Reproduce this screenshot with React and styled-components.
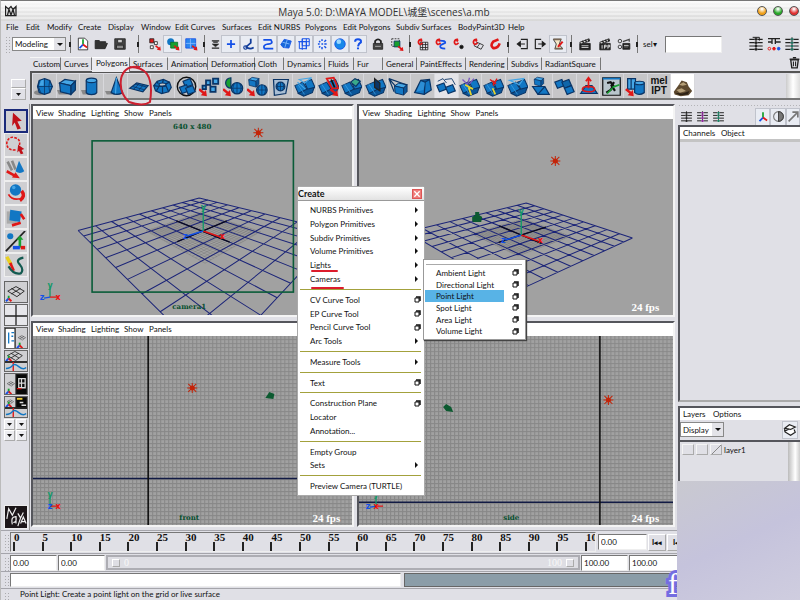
import React from "react";
import styled, { createGlobalStyle, css } from "styled-components";

const ui = `"Lato", "Noto Sans", "Noto Sans CJK SC", sans-serif`;
const chrome = "#e0e0e6";

const Global = createGlobalStyle`
  * { box-sizing: border-box; }
  body { margin: 0; font: 8px/12px ${ui}; color: #111; background: ${chrome}; overflow: hidden; }
  button, input, select { font: inherit; color: inherit; margin: 0; padding: 0; border: 0; border-radius: 0; background: none; }
  svg { display: block; }
`;

/* ---------- layout ---------- */
const Window = styled.div`
  position: relative; display: flex; flex-direction: column; height: 100vh;
  background: ${chrome}; border-top: 1px solid #777; border-left: 1px solid #bbb; overflow: hidden;
`;
const TitleBar = styled.header`
  display: flex; align-items: center; height: 20px; padding: 0 0 0 4px; flex: none;
  background: repeating-linear-gradient(#ffffff66 0 2px, transparent 2px 4px), linear-gradient(#fafafa, #d8d8d8);
  h1 { flex: 1; margin: 0; padding-top: 2px; font: 400 10px/14px "Open Sans", "Noto Sans CJK SC", sans-serif; color: #333; text-align: center; }
`;
const Lamp = styled.button`
  width: 10px; height: 10px; border-radius: 50%; margin-left: 6px; border: 1px solid #555;
  background: radial-gradient(circle at 50% 25%, #fff 5%, ${(p) => p.$c} 60%);
  &:last-child { margin-right: 1px; }
`;
const MenuBar = styled.nav`
  display: grid; grid-template-columns: ${(p) => p.$cols}; align-items: center; flex: none;
  height: ${(p) => p.$h || 13}px; padding-left: ${(p) => p.$pad || 3}px;
  background: ${(p) => p.$bg || "transparent"};
  button { text-align: left; white-space: nowrap; line-height: 12px; }
`;
const StatusLine = styled.div`
  display: flex; align-items: center; height: 22px; padding-left: 4px; flex: none;
`;
const Grip = styled.span`
  flex: none; width: 5px; margin-right: ${(p) => p.$m || 0}px; align-self: stretch; margin-top: 3px;
  background: radial-gradient(circle, #888 0 1px, transparent 1px) 0 0 / 3px 3px; opacity: .6;
`;
const Combo = styled.select`
  width: ${(p) => p.$w}px; height: ${(p) => p.$h || 14}px; padding: 0 2px; border: 1px solid #888; appearance: none; line-height: 10px;
  background: linear-gradient(90deg, transparent calc(100% - 11px), #e3e3e8 0);
  background-color: #fff;
`;
const ComboWrap = styled.span`
  position: relative; display: inline-flex; flex: none;
  &::after { content: ""; position: absolute; right: 3px; top: 6px; border: 3px solid transparent; border-top-color: #111; pointer-events: none; }
`;
const Tool = styled.button`
  flex: none; width: ${(p) => p.$w}px; height: 18px; display: grid; place-items: center;
  ${(p) => p.$on && css`background: #e9ecf3; border: 1px solid #c0c3cc;`}
`;
const Divider = styled.i`
  flex: none; width: ${(p) => p.$w}px; height: 18px;
  background: linear-gradient(#222, #222) center / 2px 5px no-repeat, linear-gradient(#777, #777) center / 1px 18px no-repeat;
`;
const Field = styled.input`
  width: ${(p) => p.$w}px; height: ${(p) => p.$h || 16}px; padding: 0 2px; background: #fff;
  border: 1px solid #eee; border-top-color: #777; border-left-color: #777; flex: none; min-width: 0;
`;
const Spacer = styled.i`flex: 1;`;
const SelLabel = styled.label`width: 24px; padding-left: 2px; flex: none; white-space: nowrap;`;

const ShelfArea = styled.section`display: grid; grid-template-columns: 29px 1fr; height: 46px; flex: none;`;
const ShelfSide = styled.div`
  display: flex; flex-direction: column; justify-content: flex-end; align-items: flex-end; padding: 0 4px 1px 0;
`;
const SideButton = styled.button`
  width: 15px; height: ${(p) => p.$h}px; display: grid; place-items: center; border: 1px solid #aaa; border-top-color: #fff; border-left-color: #fff;
`;
const TabRow = styled.div`display: flex; align-items: flex-end; height: 16px;`;
const Tabs = styled.div`
  display: grid; height: 14px; flex: none;
  grid-template-columns: 31px 31px 38px 38px 40px 47px 29px 41px 29px 29px 34px 49px 42px 34px 59px;
`;
const Tab = styled.button`
  text-align: left; padding-left: 3px; border-right: 1px solid #777; border-top: 1px solid #f6f6f6; white-space: nowrap; height: 13px; line-height: 11px;
  ${(p) => p.$on && css`background: #ececf0; border-top-color: #fff; padding-bottom: 3px; height: 15px; padding-left: 4px;`}
`;
const Shelf = styled.div`
  display: flex; height: 29px; padding: 1px 0 0 1px; border: 2px solid #555; border-right: 0; border-bottom-color: #777; background: #dcdce2;
`;
const ShelfGrid = styled.div`display: grid; grid-template-columns: repeat(28, 1fr); width: 662px; height: 24px;`;
const ShelfButton = styled.button`
  display: grid; place-items: center; background: ${(p) => p.$bg || "#c6c6c8"}; border-right: 1px solid #d8d8dc; overflow: hidden;
`;
const ShelfScroll = styled.i`margin-left: auto; width: 14px; background: linear-gradient(90deg, #ccc, #fff 50%, #ddd);`;
const MelText = styled.b`font: 700 10px/10px "Liberation Sans", sans-serif; color: #111;`;

const Main = styled.main`
  flex: 1; min-height: 0; display: grid; grid-template-columns: 29px 1fr 122px; padding-top: 3px;
`;
const ToolBox = styled.aside`
  display: flex; flex-direction: column; align-items: center; padding: 5px 2px 1px 3px; border-right: 1px solid #999;
`;
const BoxButton = styled.button`
  flex: none; width: 24px; height: 24px; display: grid; place-items: center; overflow: hidden;
  background: ${(p) => p.$bg || "#cfcfd2"}; border: 1px solid #eee;
  ${(p) => p.$on && css`border: 2px solid #1a2a7a;`}
  ${(p) => p.$frame && css`border: 1px solid #666; height: 22px; margin-bottom: 1px;`}
`;
const Gap = styled.i`height: ${(p) => p.$h}px; flex: none;`;
const ArrowPad = styled.div`
  display: grid; grid-template: 11px 11px / 11px 11px; gap: 0 1px;
  button { display: grid; place-items: center; border: 1px solid #aaa; border-top-color: #fff; border-left-color: #fff; background: #ececf0; }
`;
const Views = styled.div`
  display: grid; grid-template: 215fr 208fr / 325fr 319fr; gap: 4px 3px; padding: 0 3px 3px 1px; min-width: 0; min-height: 0;
`;
const View = styled.section`
  display: flex; flex-direction: column; min-width: 0; min-height: 0; border: 2px solid #f4f4f4;
  border-top-color: #55565c; border-left-color: #55565c; background: #a1a1a1;
  svg { flex: 1; width: 100%; min-height: 0; }
`;
const Side = styled.aside`display: flex; flex-direction: column; min-width: 0; background: ${chrome};`;
const DotStrip = styled.i`
  height: 4px; flex: none; background: radial-gradient(circle, #888 0 1px, transparent 1px) 0 0 / 3px 3px; opacity: .5;
`;
const SideTools = styled.div`display: flex; align-items: center; height: 17px; flex: none;`;
const Frame = styled.section`
  display: flex; flex-direction: column; border: 2px solid #55565c; border-right: 0; border-bottom-color: #aaa;
  flex: ${(p) => p.$flex}; min-height: 0;
`;
const Strip = styled.i`height: 3px; background: #c4c4c4; flex: none;`;
const LayerTools = styled.div`display: flex; align-items: center; height: 20px; padding-right: 2px; flex: none;`;
const LayerList = styled.ul`
  margin: 0; padding: 2px; list-style: none; flex: 1; border-top: 2px solid #55565c;
  background: linear-gradient(90deg, #bbb, #fff 60%, #ccc) right 0 top 0 / 12px 100% no-repeat;
  li { display: flex; align-items: center; gap: 2px; }
`;
const LayerBox = styled.button`
  width: 12px; height: 11px; border: 1px solid #f4f4f4; border-bottom-color: #aaa; border-right-color: #aaa;
  ${(p) => p.$slash && css`background: linear-gradient(135deg, transparent 48%, #888 48% 54%, transparent 54%);`}
`;

const Row = styled.div`
  display: flex; align-items: center; height: ${(p) => p.$h}px; flex: none; padding-left: 3px; gap: 1px; border-top: 1px solid #a5a5ab;
`;
const Track = styled.div`
  flex: none; width: 586px; height: 20px; display: grid; grid-template-columns: repeat(20, 1fr) 10px; padding-left: 2px; margin-right: 1px;
  border: 1px solid #eee; border-left: 1px solid #777; border-top-color: #777; overflow: hidden;
`;
const Mark = styled.span`
  display: flex; flex-direction: column; min-width: 0; font: 700 11px/9px "Liberation Serif", serif;
  span { padding-left: 1px; }
  &::after { content: ""; width: 2px; height: 10px; background: #222; }
`;
const Range = styled.div`
  display: flex; align-items: center; justify-content: space-between; width: 474px; height: 15px; flex: none; padding: 0 4px;
  background: #dedee4; border: 2px solid #adadb3; color: #f8f8f8;
  span { display: flex; gap: 4px; align-items: center; font: 10px/10px "Liberation Serif", serif; }
  i { width: 8px; height: 8px; border: 1px solid #fff; border-bottom-color: #aaa; border-right-color: #aaa; }
`;
const Play = styled.button`
  width: 18px; height: 17px; font-size: 7px; font-weight: 900; border: 1px solid #aaa; border-top-color: #fff; border-left-color: #fff; flex: none;
  display: grid; place-items: center;
`;
const Result = styled.output`flex: 1; height: 14px; background: #8b9da8; border: 1px solid #666; margin-left: 2px;`;
const Help = styled.p`margin: 0; padding-left: 10px; line-height: 11px; align-self: flex-end;`;

/* ---------- floating parts ---------- */
const Popup = styled.div`
  position: absolute; left: 296px; top: 185px; width: 128px; height: 310px; display: flex; flex-direction: column;
  background: #fff; border: 1px solid #aaa; border-radius: 3px 3px 0 0;
`;
const PopupTitle = styled.div`
  display: flex; align-items: center; justify-content: space-between; height: 14px; padding: 0 2px 0 0; flex: none;
  font-weight: 700; font-size: 9px; line-height: 12px; border-bottom: 1px solid #999;
  background: linear-gradient(#fff, #e2e2e2);
`;
const Close = styled.button`width: 10px; height: 10px; background: #ee7b78; border: 1px solid #d55; display: grid; place-items: center;`;
const Items = styled.div`flex: 1; min-height: 0; display: flex; flex-direction: column; padding: 2px 3px 2px 2px;`;
const Item = styled.button`
  flex: 0 1 ${(p) => p.$h || 14}px; min-height: 0; display: flex; align-items: center; justify-content: space-between; padding: 0 0 0 10px; text-align: left; white-space: nowrap;
`;
const Rule = styled.hr`flex: 0 1 7px; width: 100%; margin: 0; border: 0; background: linear-gradient(#a3a13c, #a3a13c) center / 100% 1px no-repeat;`;
const Marker = styled.u`
  text-decoration: none; position: relative;
  &::after { content: ""; position: absolute; left: 1px; top: ${(p) => p.$y}px; width: ${(p) => p.$w}px; height: 2px; background: #dc1c2c; border-radius: 1px; }
`;
const SubPopup = styled.div`
  position: absolute; left: 422px; top: 258px; width: 103px; height: 81px; padding: 7px 1px 2px 1px; display: flex; flex-direction: column;
  background: linear-gradient(#aaa, #aaa) 2px 4px / 96px 1px no-repeat, #fff; border: 1px solid #999; box-shadow: 1px 1px 1px #444;
`;
const SubItem = styled(Item)`
  padding-right: 5px; padding-left: 11px;
  ${(p) => p.$on && css`background: linear-gradient(#58b3e6, #58b3e6) 0 0 / 79px 100% no-repeat;`}
`;
const Circled = styled.svg`position: absolute; left: 115px; top: 62px; pointer-events: none;`;
const Cover = styled.div`
  position: absolute; right: 0; bottom: 0; width: 123px; height: 119px;
  background: linear-gradient(155deg, #c9c9d0, #c5c3dc 50%, #cfcddf);
`;
const Logo = styled.span`
  position: absolute; right: 120px; bottom: 0; width: 13px; height: 30px;
  font: 400 30px/28px "Liberation Serif", serif; color: #fff; -webkit-text-stroke: 6px #746de0; paint-order: stroke fill; padding-left: 1px;
`;

/* ---------- icons ---------- */
const D = "#0b3566", B = "#1277c4", L = "#45a6e6", R = "#e01818", G = "#18a030", U = "#1450e8";
const Svg = ({ s = 18, v = 24, children }) => (
  <svg width={s} height={s} viewBox={`0 0 ${v} ${v}`} fill="none" stroke="#222" strokeWidth="1.4" aria-hidden="true">{children}</svg>
);
const Quad = ({ x = 0, y = 0, f = B }) => <path d={`M${x} ${y + 4}l8-3 3 7-8 3z`} fill={f} stroke={D} />;
const Plates = () => (
  <g stroke={D} strokeWidth="1.2">
    <path d="M1 11l9-4 5 8-10 5z" fill={B} /><path d="M12 7l8-3 4 9-8 3z" fill={B} /><path d="M5 20l10-5 8-2-2 6-10 4z" fill="#0b5699" /><path d="M4 9l8 12" stroke={L} strokeWidth=".8" />
  </g>
);
const Cube = ({ x = 0, y = 0, k = 1 }) => (
  <g transform={`translate(${x} ${y}) scale(${k})`} stroke={D}><path d="M3 8l6-4 12 2-5 5z" fill={L} /><path d="M3 8l13 3v10L4 18z" fill={B} /><path d="M16 11l5-5v10l-5 5z" fill="#0b5699" /></g>
);
const Cyl = ({ x = 0, k = 1 }) => (
  <g transform={`translate(${x} 0) scale(${k})`} stroke={D}><path d="M6 5v14c2 3 10 3 12 0V5" fill={B} /><ellipse cx="12" cy="5" rx="6" ry="2.5" fill={L} /></g>
);
const Ball = ({ x = 12, y = 12, r = 8 }) => (
  <g stroke={D}><circle cx={x} cy={y} r={r} fill={B} /><path d={`M${x - r} ${y}h${2 * r}M${x} ${y - r}v${2 * r}M${x - r / 2} ${y - r * .8}q-${r / 2} ${r * .8} 0 ${r * 1.6}M${x + r / 2} ${y - r * .8}q${r / 2} ${r * .8} 0 ${r * 1.6}`} strokeWidth=".9" /></g>
);
const RedArrow = ({ x = 0, y = 0 }) => <path d={`M${x + 1} ${y + 1}l5 4 2-2 1 7-7-1 2-2-5-4z`} fill={R} stroke="none" />;
const shelf = [
  <><ellipse cx="7" cy="19" rx="7" ry="3" fill="#888" stroke="none" /><path d="M12 3l6 2 3 7-3 7-6 2-6-2-2-7 2-7z" fill={B} stroke={D} /><path d="M4 12h17M12 3v18M6 5l-1 7 3 8M18 5l-1 7 1 7" stroke={D} strokeWidth=".9" /><path d="M8 5l3-1v7H6z" fill={L} stroke="none" /></>,
  <><path d="M0 16h12v5H2z" fill="#888" stroke="none" /><Cube /></>,
  <><path d="M0 16h12v5H2z" fill="#888" stroke="none" /><Cyl /></>,
  <><path d="M0 17h12v4H2z" fill="#888" stroke="none" /><path d="M13 2l7 17q-6 4-13 0z" fill={B} stroke={D} /><path d="M13 2l-1 18" stroke={L} /></>,
  <g stroke={D}><path d="M2 14l8-6 13 3-6 7z" fill={B} /><path d="M5 12l13 3.500M8 9l13 3.500M6.500 15l7-7M12 16.500l6-7" strokeWidth="1" /></g>,
  <g stroke={D}><path d="M2 11l4-5 7-2 7 3 2 6-3 5-8 2-7-3z" fill={B} /><ellipse cx="12" cy="10" rx="4" ry="2" fill="#c6c6c8" /><path d="M2 11l6 1-3 5M12 12v8M16 11l3 7M7 9L6 6M16 9l4-2M12 8l1-4M8 12l8-1" /></g>,
  <><circle cx="12" cy="12" r="10.500" stroke="#111" strokeWidth="1.600" /><Quad x={8} y={2} /><Quad x={4} y={9} /><Quad x={11} y={10} /></>,
  <><g fill={L} stroke={D} strokeWidth="2"><path d="M8 5h5v5H8zM16 3h6v6h-6zM13 12h6v6h-6zM4 11h4v4H4z" /></g><RedArrow x={0} y={13} /></>,
  <><path d="M9 2a6 6 0 000 12z" fill={G} stroke={D} /><Ball x={16} y={14} r={6.5} /><RedArrow x={0} y={13} /></>,
  <><Cube x={0} y={-1} k={.65} /><Ball x={17} y={16} r={6} /><RedArrow x={0} y={13} /></>,
  <><path d="M4 4h17l-3 16-13 2z" fill="#a9bed4" stroke={D} /><Ball r={5} /></>,
  <><Plates /><path d="M6 4l14-2-8 6zM4 7l9 8" stroke={L} /></>,
  <><Plates /><path d="M10 3l8-1 5 12h-7z" stroke={R} strokeWidth="2" /><path d="M15 4l4 9" stroke="#111" strokeWidth="2" /><RedArrow x={14} y={13} /></>,
  <><Plates /><path d="M11 7l5-4 6 3-5 6z" fill="#3aa98a" stroke={D} /></>,
  <><Plates /><path d="M11 3l6 5v9l-6-4z" fill={D} /></>,
  <><Cube x={5} y={5} k={.8} /><path d="M1 3l7 8M1 3l20 7M1 3l6 15" stroke={D} /></>,
  <><path d="M3 19L10 5l10-1 2 12-8 5z" fill={B} stroke={D} /><path d="M10 5l5 2 5-3M15 7l-1 14" stroke={D} /><path d="M10 6l5 2-2 8-8 2z" fill={L} stroke="none" opacity=".5" /></>,
  <><Quad x={1} y={7} /><Quad x={11} y={9} /><path d="M2 6l6-3 4 5M10 4l8-1 4 7" stroke={D} strokeWidth="1" /></>,
  <><Plates /><path d="M4 4l6 6M12 2l-2 7M17 3l-5 6" stroke="#7a58c0" strokeWidth="1.500" /><path d="M11 13l3 9M7 10l9 5" stroke="#e6d530" strokeWidth="2" /></>,
  <><Plates /><path d="M8 4l7 5M16 3l-4 7M12 5v6" stroke={R} strokeWidth="1.600" /><path d="M11 14l3 7" stroke="#e6d530" strokeWidth="2" /></>,
  <><Plates /><path d="M3 5l16-2-5 7z" stroke={L} /></>,
  <><Cube x={3} y={-1} k={.6} /><path d="M3 12h14l5 9H9z" fill={B} stroke={D} /><path d="M9 21l8-9" stroke={D} /></>,
  <><Quad x={1} y={3} /><Quad x={9} y={3} f="#0f66aa" /><Quad x={12} y={10} /></>,
  <><path d="M3 20l6-9h7l6 9z" fill={B} stroke={D} /><ellipse cx="12" cy="15" rx="7" ry="3" stroke={R} strokeWidth="1.800" /><path d="M12 14V3M9 6l3-4 3 4" stroke={R} strokeWidth="2" /></>,
  <><path d="M2 2h20v20H2z" fill="#b9c6cc" stroke="#111" /><path d="M2 3h20" stroke={B} strokeWidth="2" /><path d="M7 8l4-1 3 4-3 5-5 3M15 7l-3 4 4 6" stroke="#111" strokeWidth="2.500" /><path d="M13 13l8-3M7 20l6-6" stroke={G} strokeWidth="2" /></>,
  <><path d="M3 3h9v12H3z" fill={L} stroke={D} /><path d="M7 3v12" stroke={D} /><path d="M11 8v11q5 4 11 0V8z" fill={B} stroke={D} /><ellipse cx="16.500" cy="8" rx="5.500" ry="2" fill={L} stroke={D} /><RedArrow x={1} y={13} /></>,
  null,
  <g stroke="none" fill="#5e4a30"><path d="M2 18l5-7 4-6 6 2 2 5 4 5-4 5-9 1-7-2z" /><path d="M8 10l5-3 4 3-5 1zM5 16l6-2 5 3-7 2z" fill="#b59f78" /><path d="M3 19l9 1 8-3-2 4-9 1z" fill="#2c2114" /></g>,
];

const Tint = ({ c }) => <path d="M12 4C5 3 4 12 9 13M12 4l-2 4M9 13l4-3" stroke={c} strokeWidth="3" />;
const Axis = () => <><path d="M12 13V4" stroke={G} strokeWidth="3" /><path d="M12 13l-6 6" stroke={U} strokeWidth="3" /><path d="M12 13l7 5" stroke={R} strokeWidth="3" /></>;
const Clap = ({ t }) => <><path d="M3 11h18v11H3z" fill="#222" /><path d="M3 9l16-6 1 4-15 5z" fill="#ddd" /><path d="M7 7l3 3M12 5l3 3M17 4l2 3" strokeWidth="2.500" />{t ? <path d="M7 14v6M11 20v-6h3v3h-3M17 20v-6h3v3h-3" stroke="#fff" /> : <path d="M6 15h12M6 18h12" stroke="#ddd" strokeWidth="1.500" />}</>;
const Sliders = ({ c = "#222" }) => <><path d="M2 5h8M2 10h8M2 15h8M2 20h8M14 5h8M14 10h8M14 15h8M14 20h8" strokeWidth="1.800" /><path d="M12 2v20" stroke="#555" strokeWidth="2" /><path d="M10 5h4M10 10h4M10 15h4M10 20h4" stroke={c} strokeWidth="3" /></>;

const status = [
  ["|", 8],
  ["New scene", 17, <><path d="M4 2h11l5 5v15H4z" fill="#fff" /><Axis /></>],
  ["Open scene", 19, <path d="M2 20V6h7l2 2h9v3h3l-4 9z" fill="#333" />],
  ["Save scene", 20, <><path d="M3 3h18v18H3z" fill="#444" /><path d="M8 4h8v6H8z" fill="#ccc" /><path d="M6 14h12v6H6z" fill="#888" /></>],
  ["|", 16],
  ["Select by hierarchy", 17, <><path d="M3 3h7v7H3z" fill={R} /><path d="M11 8h5v5h-5zM4 15h5v5H4z" fill="#fff" /><RedArrow x={13} y={13} /></>],
  ["Select by object", 19, <><circle cx="8" cy="8" r="6" fill={B} stroke="none" /><path d="M8 9h12v10H8z" fill={G} stroke="#0a7020" /><RedArrow x={14} y={13} /></>, 1],
  ["Select by component", 17, <><path d="M3 3h17v16H3z" fill="#2b86ee" stroke={U} /><path d="M11 3v16M3 11h17" stroke="#8bf" /><RedArrow x={14} y={13} /></>],
  ["|", 10],
  ["Mask", 12, <><path d="M4 4h16M4 20h16M7 7h10" strokeWidth="2.500" /><path d="M5 11h14l-7 6z" fill="#222" /></>],
  ["Handles", 19, <path d="M12 5v14M5 12h14" stroke={U} strokeWidth="3" />, 1],
  ["Joints", 18, <><path d="M15 3v7L7 17q6 5 13 1" stroke="#113c9a" strokeWidth="3" /><circle cx="6" cy="18" r="3" stroke="#113c9a" strokeWidth="2" /></>, 1],
  ["Curves", 19, <path d="M4 5h13q5 7-5 7-10 2-6 8h15" stroke={U} strokeWidth="3" />, 1],
  ["Surfaces", 18, <><path d="M3 13L9 4l12 3-4 12-10-1z" fill="#1769d8" stroke={U} /><path d="M6 9l12 3M14 5l-4 13" stroke="#8bf" /></>, 1],
  ["Deformations", 18, <path d="M4 8h12v12H4zM9 3h12v12H9zM2 8h19M9 3v19M16 3v18" stroke={U} strokeWidth="1.700" />, 1],
  ["Dynamics", 18, <path d="M12 4v3M12 17v4M5 12h3M16 12h4M7 7l2 2M16 16l3 3M7 18l2-2M16 8l3-3M11 12h3" stroke={U} strokeWidth="2.500" />, 1],
  ["Rendering", 18, <><circle cx="12" cy="12" r="9" fill="#1888e8" stroke={U} /><circle cx="10" cy="8" r="4" fill="#9bd8ff" stroke="none" /></>, 1],
  ["Miscellaneous", 18, <path d="M7 8q0-4 5-4 6 0 5 5-4 2-5 7M12 18v3" stroke={U} strokeWidth="3.500" />, 1],
  ["Lock selection", 21, <><path d="M4 11h16v10H4z" fill="#444" /><path d="M7 11V7q5-6 10 0v4" strokeWidth="3" /><path d="M7 16h10" stroke="#bbb" /></>],
  ["Highlight selection", 18, <><path d="M3 3h13v13H3z" stroke="#222" strokeDasharray="3 2" /><path d="M7 7h10v10H7z" fill={G} stroke={D} /><RedArrow x={14} y={14} /></>],
  ["|", 7],
  ["Snap to grids", 18, <><path d="M9 9h13v13H9zM13 9v13M18 9v13M9 13h13M9 18h13" /><Tint c={R} /></>],
  ["Snap to curves", 18, <><path d="M12 6q10 0 9 4l-8 4q-3 6 8 6" stroke={U} strokeWidth="3" /><Tint c={R} /></>],
  ["Snap to points", 18, <><circle cx="18" cy="17" r="3" fill="#111" /><Tint c={R} /></>],
  ["Snap to view planes", 19, <><path d="M7 15l5-6 11 5-4 7zM12 18l5-7" /><Tint c={R} /></>],
  ["Make live", 18, <path d="M18 4l-9 4Q3 15 9 19q8 1 11-8" stroke={R} strokeWidth="4.500" />],
  ["|", 8],
  ["Inputs", 19, <><path d="M10 4h11v16H10" strokeWidth="2" /><path d="M17 12H4M9 8l-5 4 5 4z" fill="#111" strokeWidth="2" /></>],
  ["Outputs", 18, <><path d="M14 4H4v16h10" strokeWidth="2" /><path d="M9 12h12M16 8l5 4-5 4z" fill="#111" strokeWidth="2" /></>],
  ["History", 18, <><path d="M4 4h13l-3 9 6 7H7l2-8z" fill="#f3e6c8" /><path d="M4 4h14M6 20h14" strokeWidth="3" stroke="#765" /><path d="M20 8l-8 9" stroke={R} strokeWidth="3.500" /></>, 1],
  ["|", 8],
  ["Render", 20, <Clap />],
  ["IPR render", 20, <Clap t />],
  ["Render globals", 18, <><circle cx="5" cy="7" r="3" /><circle cx="5" cy="17" r="3" /><path d="M10 11h12v10H10z" fill="#222" /><path d="M10 8l11-4v4M12 14h7M12 18h7" stroke="#444" strokeWidth="2" /><path d="M12 15h8" stroke="#fff" /></>],
  ["|", 8],
];

const boxIcons = [
  <path d="M8 2l10 9-5 1 4 8-4 1-3-8-3 4z" fill="#c01018" stroke="none" />,
  <><path d="M12 17Q2 18 2 9 4 1 11 3q8 2 5 10" stroke={R} strokeWidth="1.800" strokeDasharray="3 1.500" /><path d="M15 11l7 5-3 1 2 4-3 1-2-4-2 2z" fill="#c01018" stroke="none" /></>,
  <><path d="M3 3l5 10M8 2l4 10" stroke="#888" strokeWidth="3" /><path d="M16 2l6 12q-5 4-10 0z" fill={B} stroke="none" /><path d="M2 14l9 5" stroke={R} strokeWidth="3" /><path d="M8 21l9 1-5-7z" fill={R} stroke="none" /></>,
  <><circle cx="12" cy="8" r="6.500" fill={B} stroke="none" /><circle cx="10" cy="5" r="2" fill={L} stroke="none" /><path d="M4 13q4 7 13 5" stroke={R} strokeWidth="2" /><path d="M19 9q5 6-2 11" stroke={R} strokeWidth="4" /></>,
  <><path d="M2 5h11v14H2z" fill="#aaa" stroke="none" /><path d="M6 3l13 2-2 12-12-2z" fill={B} stroke="none" /><path d="M8 21l10-3M18 8l4 6" stroke={R} strokeWidth="3" /></>,
  <><path d="M23 0L1 23" strokeWidth="2" /><circle cx="6" cy="6" r="3.500" fill={B} stroke="none" /><path d="M17 19V8" stroke={G} strokeWidth="3" /><path d="M13 10l4-5 4 5z" fill={G} stroke="none" /><path d="M17 19H9" stroke={U} strokeWidth="4" /><path d="M18 19h5" stroke={R} strokeWidth="4" /></>,
  <><path d="M2 2l5 9" stroke="#e8d020" strokeWidth="4" /><path d="M6 9l4 9" stroke={R} strokeWidth="3" /><path d="M21 3q-10 2-4 8 5 6 1 10-8 2-14-8" stroke="#135a50" strokeWidth="2.500" /></>,
];
const Diamond = ({ x = 0, y = 0, k = 1 }) => <path transform={`translate(${x} ${y}) scale(${k})`} d="M3 10l9-5 9 5-8 6zM7 7l10 6M17 7L7 13" strokeWidth="1" />;
const Mini = ({ x = 0, y = 0 }) => <g transform={`translate(${x} ${y})`} strokeWidth="2"><path d="M4 18v-3" stroke={G} /><path d="M4 18l-3 3" stroke={U} /><path d="M4 18l3 3" stroke={R} /></g>;
const Wave = () => <><path d="M0 12h24" strokeWidth="2" /><path d="M3 14v8" stroke="#ccc" strokeWidth="4" /><path d="M9 12v12" stroke={R} strokeWidth="1.500" /><path d="M1 19q5 0 7-3t7 1 8 1" stroke={B} strokeWidth="1.600" /></>;
const layouts = [
  <><Diamond /><Mini /></>,
  <path d="M12 0v24M0 12h24" />,
  <><path d="M0 0h11v24H0z" fill="#fff" /><path d="M4 5v12M7 5h3M7 9h2M7 14h3" stroke={B} /><Diamond x={13} y={6} k={.45} /><Mini x={12} y={1} /></>,
  <><Diamond y={-4} k={.9} /><Mini y={-10} /><Wave /></>,
  <><path d="M12 0h12v24H12z" fill="#080808" /><path d="M15 5h7v10h-7zM18 5v10M15 10h7" stroke="#ddd" /><path d="M13 16h5" stroke={R} /><Diamond x={1} y={6} k={.45} /><Mini y={1} /></>,
  <><path d="M12 0h12v12H12z" fill="#080808" /><path d="M13 2h6" stroke="#ec3" strokeWidth="2" /><path d="M16 6h4M18 9h5" stroke="#ddd" /><Diamond x={1} y={1} k={.4} /><Mini y={-10} /><Wave /></>,
];
const Down = () => <svg width="5" height="3" viewBox="0 0 5 3"><path d="M0 0h5L2.500 3z" fill="#111" /></svg>;
const Caret = () => <svg width="7" height="6" viewBox="0 0 7 6"><path d="M1 0v6l3-3z" fill="#111" /></svg>;
const OptionBox = () => <svg width="7" height="7" viewBox="0 0 7 7"><path d="M1 2h4v4H1z" fill="#fff" stroke="#111" /><path d="M2 1h4v4" fill="none" stroke="#111" strokeWidth="1.500" /></svg>;

/* ---------- scenes ---------- */
function plane([b, r, f, l]) {
  const dx1 = r[0] - f[0], dx2 = l[0] - f[0], sx = b[0] - r[0] + f[0] - l[0];
  const dy1 = r[1] - f[1], dy2 = l[1] - f[1], sy = b[1] - r[1] + f[1] - l[1];
  const den = dx1 * dy2 - dx2 * dy1;
  const g = (sx * dy2 - dx2 * sy) / den, h = (dx1 * sy - sx * dy1) / den;
  return (u, v) => {
    const w = g * u + h * v + 1;
    const c = (i) => ((r[i] - b[i] + g * r[i]) * u + (l[i] - b[i] + h * l[i]) * v + b[i]) / w;
    return `${c(0).toFixed(1)} ${c(1).toFixed(1)}`;
  };
}
const mesh = (p, a, z, n) => {
  let d = "";
  for (let i = 0; i <= n; i++) {
    const t = a + ((z - a) * i) / n;
    d += `M${p(t, a)}L${p(t, z)}M${p(a, t)}L${p(z, t)}`;
  }
  return d;
};
const Star = ({ x, y }) => (
  <g stroke="#c42408"><path d={`M${x - 5} ${y}h10M${x} ${y - 5}v10M${x - 4} ${y - 4}l8 8M${x + 4} ${y - 4}l-8 8`} strokeWidth="1" /><circle cx={x} cy={y} r="2" fill="#c42408" /></g>
);
const Word = styled.text`font: 700 7px "DejaVu Serif", serif; fill: ${(p) => p.$c || "#07502f"}; text-anchor: middle;`;
const Letter = styled.text`font: 700 8px "DejaVu Sans", sans-serif; fill: ${(p) => p.$c}; text-anchor: middle;`;
const Fps = styled.text`font: 700 11px "Liberation Serif", serif; fill: #fff;`;
const Gizmo = ({ x, y, ortho }) => (
  <g strokeWidth="1.300">
    <path d={`M${x} ${y}v-10`} stroke="#16996a" /><path d={`M${x} ${y}h7`} stroke={R} />{ortho !== "front" && <path d={`M${x} ${y}l-6 1`} stroke={U} />}
    <Letter x={x} y={y - 9} $c="#16996a">y</Letter><Letter x={x + (ortho === "side" ? 0 : 8)} y={y + 3} $c="#f01010">x</Letter><Letter x={x - (ortho === "front" ? 0 : 8)} y={y + 3} $c={U}>z</Letter>
  </g>
);
function Persp({ box, corners, o, children }) {
  const p = plane(corners);
  return (
    <svg viewBox={box} preserveAspectRatio="xMidYMid slice" fill="none">
      <path d={mesh(p, 0.28, 0.72, 24)} stroke="#333" strokeOpacity=".26" strokeWidth=".6" />
      <path d={mesh(p, 0, 1, 10)} stroke="#1b2478" strokeWidth="1" />
      <path d={`M${p(0.5, 0.28)}L${p(0.5, 0.68)}M${p(0.28, 0.5)}L${p(0.68, 0.5)}`} stroke="#0a0a20" strokeWidth="1.400" />
      <path d={`M${o[0]} ${o[1]}l-16 5`} stroke={U} strokeWidth="1.400" />
      <path d={`M${o[0]} ${o[1]}l17 6`} stroke={R} strokeWidth="1.600" />
      <path d={`M${o[0]} ${o[1]}v-22`} stroke="#16996a" strokeWidth="1.400" />
      <Letter x={o[0]} y={o[1] - 21} $c="#16996a">y</Letter>
      <Letter x={o[0] - 18} y={o[1] + 8} $c={U}>z</Letter>
      <Letter x={o[0] + 19} y={o[1] + 8} $c="#f01010">x</Letter>
      {children}
    </svg>
  );
}
function Ortho({ box, id, vx, hy, x0, x1, children }) {
  return (
    <svg viewBox={box} preserveAspectRatio="xMidYMid slice" fill="none">
      <defs><pattern id={id} width="4" height="4" patternUnits="userSpaceOnUse"><path d="M0 .5h4M.5 0v4" stroke="#888" /></pattern></defs>
      <rect x={x0} y="330" width={x1 - x0} height="200" fill={`url(#${id})`} />
      <path d={`M${x0} ${hy}H${x1}`} stroke="#111a44" strokeWidth="1.500" />
      <path d={`M${vx} 330V530`} stroke="#111" strokeWidth="1.600" />
      {children}
    </svg>
  );
}
const ViewMenu = () => (
  <MenuBar $cols="22px 33px 33px 25px 30px" $h={13} $bg="#fff">
    {["View", "Shading", "Lighting", "Show", "Panels"].map((t) => <button key={t}>{t}</button>)}
  </MenuBar>
);

const menus = ["File", "Edit", "Modify", "Create", "Display", "Window", "Edit Curves", "Surfaces", "Edit NURBS", "Polygons", "Edit Polygons", "Subdiv Surfaces", "BodyPaint3D", "Help"];
const tabs = ["Custom", "Curves", "Polygons", "Surfaces", "Animation", "Deformation", "Cloth", "Dynamics", "Fluids", "Fur", "General", "PaintEffects", "Rendering", "Subdivs", "RadiantSquare"];
const create = [
  ["NURBS Primitives", ">"], ["Polygon Primitives", ">"], ["Subdiv Primitives", ">"], ["Volume Primitives", ">"], ["Lights", ">", 27], ["Cameras", ">", 33], null,
  ["CV Curve Tool", "o"], ["EP Curve Tool", "o"], ["Pencil Curve Tool", "o"], ["Arc Tools", ">"], null,
  ["Measure Tools", ">"], null, ["Text", "o"], null,
  ["Construction Plane", "o"], ["Locator"], ["Annotation..."], null, ["Empty Group"], ["Sets", ">"], null, ["Preview Camera (TURTLE)"],
];
const lights = ["Ambient Light", "Directional Light", "Point Light", "Spot Light", "Area Light", "Volume Light"];

export default function App() {
  return (
    <Window>
      <Global />
      <TitleBar>
        <Svg s={12}><path d="M1 21V3l6 5 5-5 4 6 6-6v18zM5 20l3-11 4 11 4-11 3 11" fill="#ddd" strokeWidth="2.500" /></Svg>
        <h1>Maya 5.0: D:\MAYA MODEL\城堡\scenes\a.mb</h1>
        <Lamp $c="#f0a018" aria-label="Minimize" /><Lamp $c="#28a828" aria-label="Maximize" /><Lamp $c="#e03030" aria-label="Close" />
      </TitleBar>
      <MenuBar $h={12} $pad={5} $cols="20px 21px 31px 30px 33px 34px 47px 36px 47px 38px 53px 62px 50px 30px">
        {menus.map((m) => <button key={m}>{m}</button>)}
      </MenuBar>
      <StatusLine>
        <Grip $m={2} />
        <ComboWrap><Combo $w={54} aria-label="Menu set"><option>Modeling</option></Combo></ComboWrap>
        {status.map(([name, w, art, on], i) => name === "|" ? <Divider key={i} $w={w} /> : <Tool key={i} $w={w} $on={on} aria-label={name}><Svg s={w === 12 ? 11 : 14}>{art}</Svg></Tool>)}
        <SelLabel htmlFor="sel">sel▾</SelLabel>
        <Field id="sel" $w={57} $h={17} />
        <Spacer />
        <Tool $w={18} aria-label="Attribute editor"><Svg s={16}><Sliders /><path d="M7 2h10v5" strokeWidth="1.500" /></Svg></Tool>
        <Tool $w={18} aria-label="Tool settings"><Svg s={16}><path d="M3 4h18M3 9h7M14 9h8M9 4v8M14 4v8" strokeWidth="2" /><circle cx="5" cy="19" r="2" stroke={R} /><circle cx="12" cy="19" r="2" stroke={R} fill={R} /><circle cx="19" cy="19" r="2" stroke={U} fill={U} /></Svg></Tool>
        <Tool $w={17} aria-label="Channel box"><Svg s={16}><Sliders c="#276" /></Svg></Tool>
      </StatusLine>
      <ShelfArea>
        <ShelfSide><SideButton $h={9} aria-label="Shelf tabs" /><SideButton $h={12} aria-label="Shelf menu"><Down /></SideButton></ShelfSide>
        <div>
          <TabRow>
            <Tabs>{tabs.map((t) => <Tab key={t} $on={t === "Polygons"}>{t}</Tab>)}</Tabs>
            <Spacer />
            <Tool $w={12} aria-label="Trash"><Svg s={13}><path d="M5 7h14l-2 15H7zM3 6h18M9 3h6" strokeWidth="2.500" /><path d="M10 10v9M14 10v9" strokeWidth="2" /></Svg></Tool>
          </TabRow>
          <Shelf>
            <ShelfGrid>
              {shelf.map((art, i) => (
                <ShelfButton key={i} $bg={i === 27 ? "#fff" : i === 17 ? "#e4e4e8" : ""} aria-label={`Shelf item ${i + 1}`}>
                  {art ? <Svg s={21}>{art}</Svg> : <MelText>mel<br />IPT</MelText>}
                </ShelfButton>
              ))}
            </ShelfGrid>
            <ShelfScroll />
          </Shelf>
        </div>
      </ShelfArea>

      <Main>
        <ToolBox>
          {boxIcons.map((a, i) => <BoxButton key={i} $on={i === 0} aria-label={`Tool ${i + 1}`}><Svg s={21}>{a}</Svg></BoxButton>)}
          <Gap $h={4} />
          {layouts.map((a, i) => <BoxButton key={i} $frame $bg={i === 1 ? "#e6e6ea" : ""} aria-label={`Layout ${i + 1}`}><Svg s={22}>{a}</Svg></BoxButton>)}
          <ArrowPad>{[1, 2, 3, 4].map((n) => <button key={n} aria-label={`Layout menu ${n}`}><Down /></button>)}</ArrowPad>
          <Spacer />
          <BoxButton $bg="#1c1619" aria-label="Maya"><Svg s={22}><path d="M2 14L4 3l4 7 4-8M8 20q-2-9 4-8 1 6-3 6M12 11v8M14 8l3 5 3-6M17 13l-3 9M17 19l3-7 3 7M18 17h4" stroke="#eee" strokeWidth="1.300" /></Svg></BoxButton>
        </ToolBox>

        <Views>
          <View>
            <ViewMenu />
            <Persp box="33 118 319 198" corners={[[199, 198], [338, 232], [214, 365], [78, 230.5]]} o={[203, 231]}>
              <rect x="92" y="141" width="201" height="151" stroke="#0a5c38" strokeWidth="1.600" />
              <Word x="192" y="129">640 x 480</Word>
              <Word x="189" y="309">camera1</Word>
              <Star x={258} y={133} />
              <Gizmo x={50} y={297} />
            </Persp>
          </View>
          <View>
            <ViewMenu />
            <Persp box="361 118 313 198" corners={[[528, 203], [634, 238], [514, 293], [409, 232]]} o={[523, 235]}>
              <Star x={557} y={161} />
              <path d="M474 221v-4l3-2v-3h4v3l3 2-1 5h-8z" fill="#0c5a30" />
              <Fps x="633" y="311">24 fps</Fps>
            </Persp>
          </View>
          <View>
            <ViewMenu />
            <Ortho id="gf" box="33 337 319 189" x0={20} x1={370} vx={148} hy={479.5}>
              <Star x={192} y={389} />
              <path d="M265 399l4-6 5 2-1 5z" fill="#0c5a30" />
              <Gizmo x={50} y={507} ortho="front" />
              <Word x="189" y="521">front</Word>
              <Fps x="312" y="523">24 fps</Fps>
            </Ortho>
          </View>
          <View>
            <ViewMenu />
            <Ortho id="gs" box="361 337 313 189" x0={350} x1={690} vx={601.5} hy={503}>
              <Star x={610} y={401} />
              <path d="M445 408l3-3 5 3 2 5-7-1z" fill="#0c5a30" />
              <Gizmo x={378} y={507} ortho="side" />
              <Word x="513" y="521">side</Word>
              <Fps x="633" y="523">24 fps</Fps>
            </Ortho>
          </View>
        </Views>

        <Side>
          <DotStrip />
          <SideTools>
            {["#222", "#92a", "#186"].map((c) => <Tool key={c} $w={16} aria-label="Channel layout"><Svg s={13}><Sliders c={c} /></Svg></Tool>)}
            <Spacer />
            <Tool $w={15} $on aria-label="Manipulators"><Svg s={14}><Axis /></Svg></Tool>
            <Tool $w={16} $on aria-label="Speed"><Svg s={13}><circle cx="12" cy="12" r="9" stroke="#777" strokeWidth="2" /><path d="M12 3a9 9 0 010 18z" fill="#777" /></Svg></Tool>
            <Tool $w={14} $on aria-label="Hyperbolic"><Svg s={13}><path d="M3 21L20 4M10 4h10v10" stroke="#777" strokeWidth="3" /></Svg></Tool>
          </SideTools>
          <Frame $flex="0 0 65%">
            <MenuBar $cols="38px 40px" $bg="#fff" $h={12}><button>Channels</button><button>Object</button></MenuBar>
            <Strip />
          </Frame>
          <Gap $h={4} />
          <Frame $flex="1">
            <MenuBar $cols="30px 40px" $bg="#fff" $h={12}><button>Layers</button><button>Options</button></MenuBar>
            <LayerTools>
              <ComboWrap><Combo $w={44} $h={15} aria-label="Layer mode"><option>Display</option></Combo></ComboWrap>
              <Spacer />
              <Tool $w={16} $on aria-label="New layer"><Svg s={14}><path d="M3 9l8-6 10 4-8 4zM3 14l8-4M3 15l10 6 8-5-2-5M3 9v6" strokeWidth="2" fill="#fff" /></Svg></Tool>
            </LayerTools>
            <LayerList><li><LayerBox aria-label="Visible" /><LayerBox aria-label="Template" /><LayerBox $slash aria-label="Color" />layer1</li></LayerList>
          </Frame>
        </Side>
      </Main>

      <Row $h={23}>
        <Grip />
        <Track>{Array.from({ length: 21 }, (_, i) => <Mark key={i}><span>{i * 5}</span></Mark>)}</Track>
        <Field $w={49} defaultValue="0.00" aria-label="Current time" />
        <Play aria-label="Go to start">I◂◂</Play><Play aria-label="Step back">I◂</Play>
      </Row>
      <Row $h={18}>
        <Grip />
        <Field $w={47} defaultValue="0.00" aria-label="Start" /><Field $w={47} defaultValue="0.00" aria-label="Range start" />
        <Range><span><i />0</span><span>100<i /></span></Range>
        <Field $w={47} defaultValue="100.00" aria-label="Range end" /><Field $w={60} defaultValue="100.00" aria-label="End" />
      </Row>
      <Row $h={17}><Grip /><Field $w={391} $h={14} aria-label="Command line" /><Result /></Row>
      <Row $h={12}><Grip /><Help>Point Light: Create a point light on the grid or live surface</Help></Row>

      <Popup role="menu">
        <PopupTitle>Create<Close aria-label="Close menu"><Svg s={8}><path d="M4 4l16 16M20 4L4 20" stroke="#fff" strokeWidth="4" /></Svg></Close></PopupTitle>
        <Items>
          {create.map((it, i) => it ? (
            <Item key={i} role="menuitem">
              {it[2] ? <Marker $w={it[2]} $y={it[2] > 30 ? 14 : 11}>{it[0]}</Marker> : it[0]}
              {it[1] === ">" ? <Caret /> : it[1] && <OptionBox />}
            </Item>
          ) : <Rule key={i} />)}
        </Items>
      </Popup>
      <SubPopup role="menu">
        {lights.map((l) => <SubItem key={l} $h={12} $on={l === "Point Light"} role="menuitem">{l}<OptionBox /></SubItem>)}
      </SubPopup>
      <Circled width="40" height="44" viewBox="0 0 40 44" fill="none" stroke="#cc2030" strokeWidth="2"><path d="M24 4Q8 2 5 16q-2 14 8 23 14 5 21 0Q37 20 31 11 26 4 14 4" /></Circled>
      <Logo aria-hidden="true">f</Logo>
      <Cover />
    </Window>
  );
}
